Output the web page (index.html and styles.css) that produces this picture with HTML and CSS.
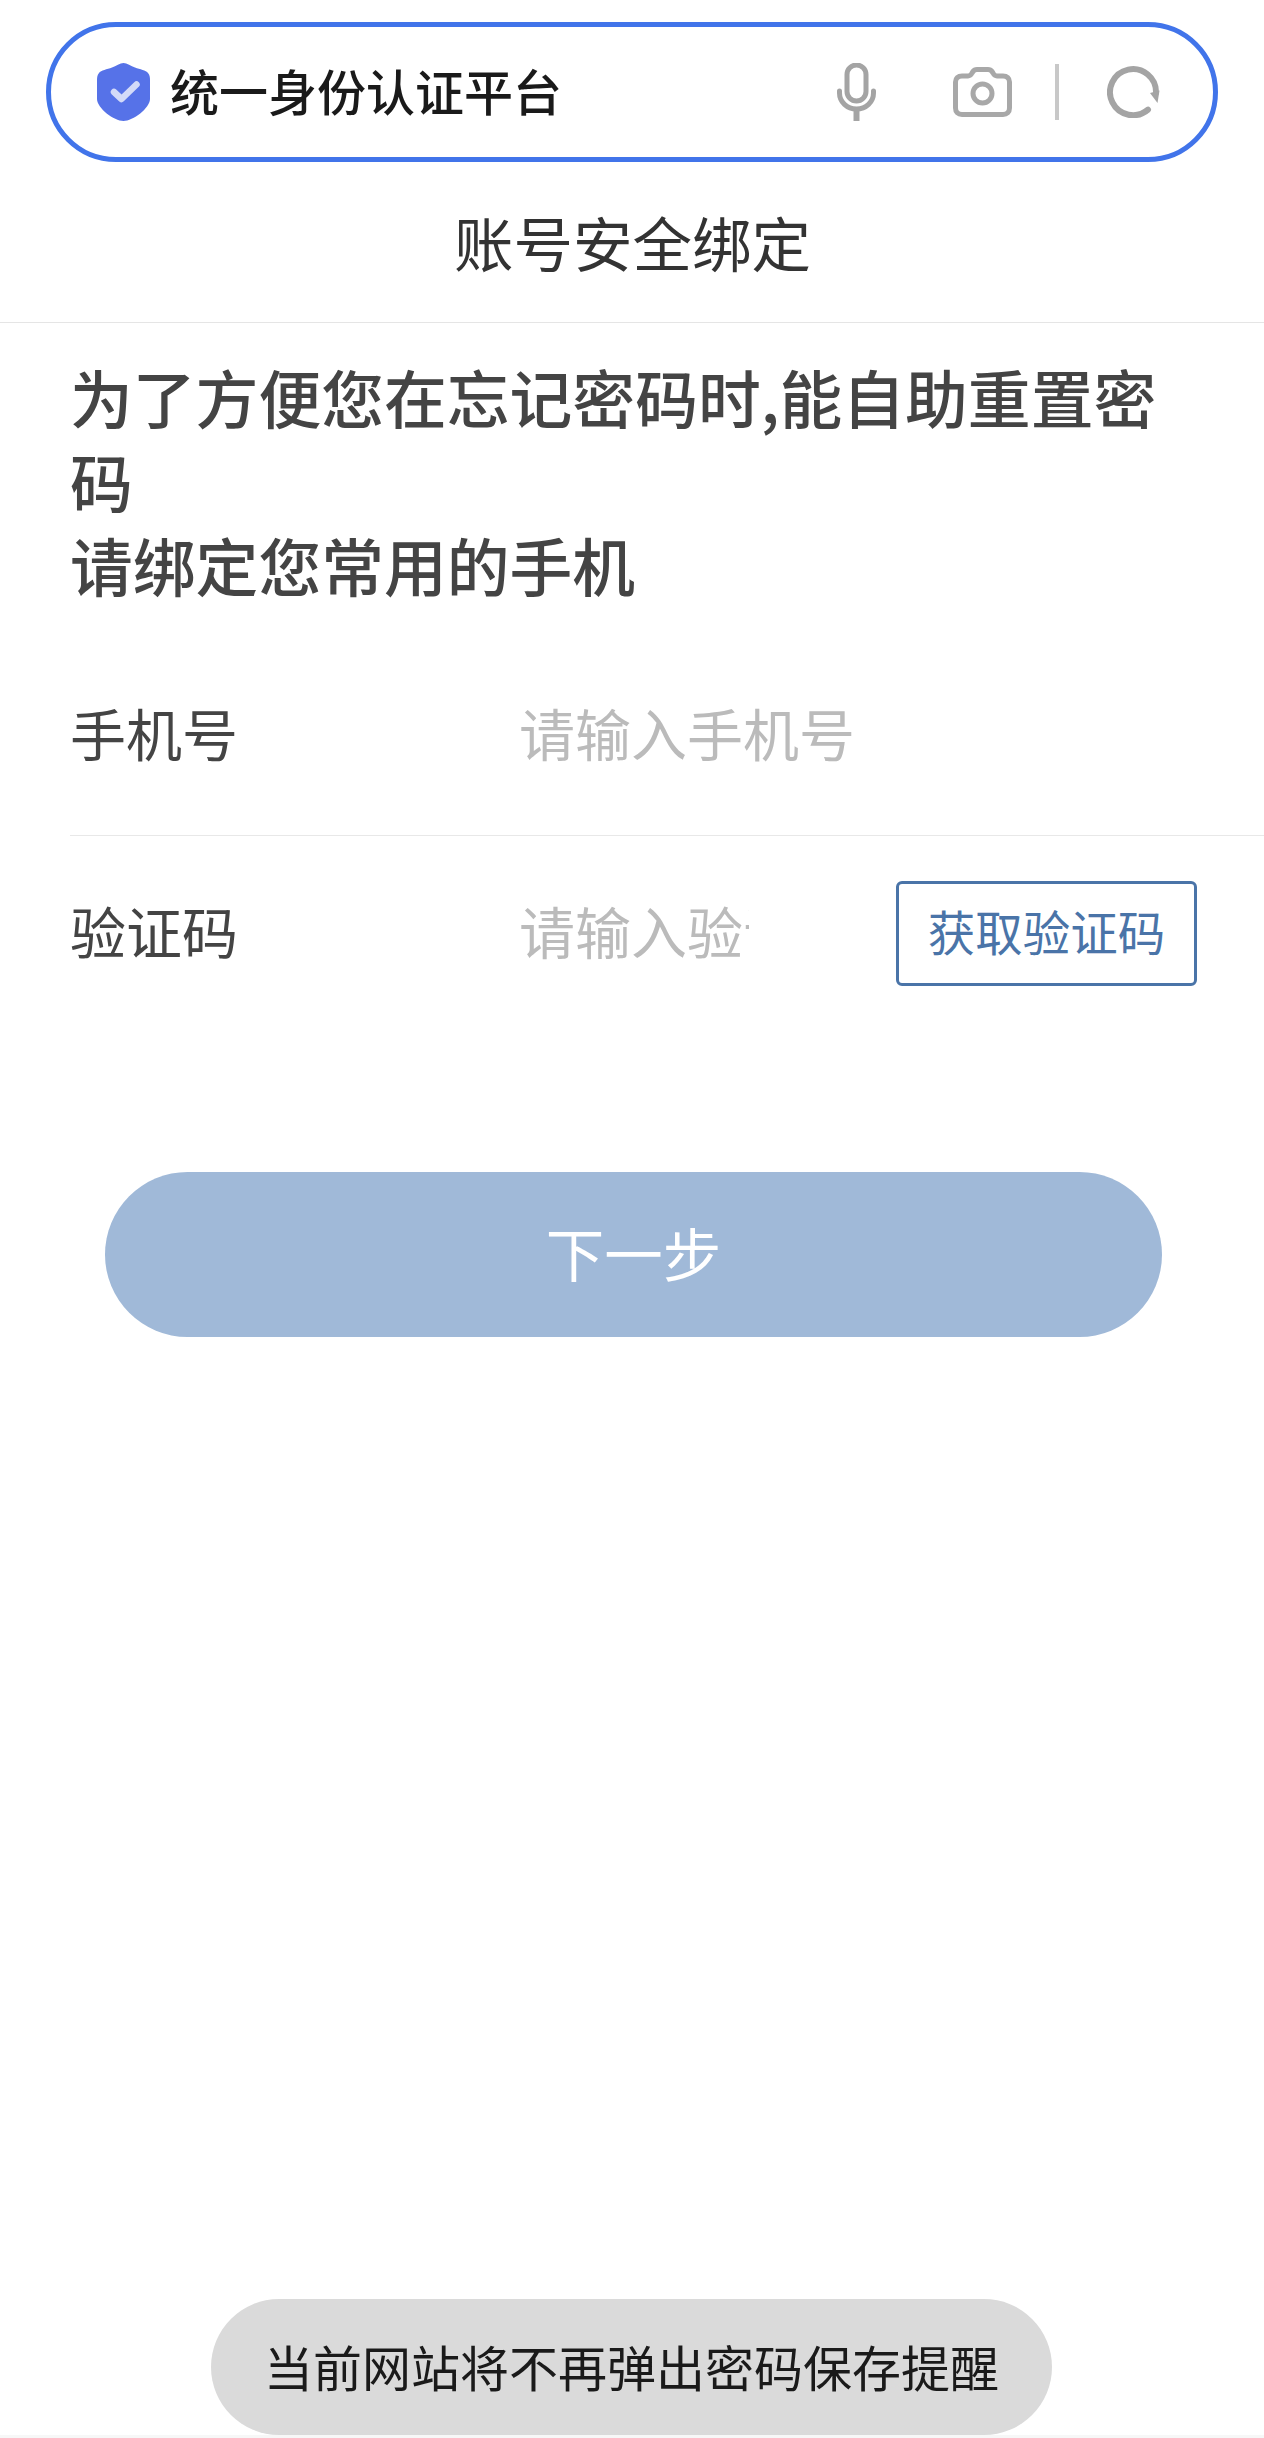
FILE: index.html
```html
<!DOCTYPE html>
<html lang="zh-CN">
<head>
    <meta charset="UTF-8">
    <meta name="viewport" content="width=device-width, initial-scale=1.0">
    <title>账号安全绑定</title>
    <link rel="stylesheet" href="styles.css">
</head>
<body>
    <div class="address-bar">
        <svg class="icon-shield" viewBox="0 0 53 58" width="53" height="58">
            <path d="M26.500 0C30 0 34 3 38 4.500C43 6.500 49 7 51 10C53 12 53 15 53 18V36C53 45 36 58 26.500 58C17 58 0 45 0 36V18C0 15 0 12 2 10C4 7 10 6.500 15 4.500C19 3 23 0 26.500 0Z" fill="#5672e8"/>
            <path d="M17 29L24.500 36L39.500 21.500" fill="none" stroke="#d3daf8" stroke-width="6.500" stroke-linecap="round" stroke-linejoin="round"/>
        </svg>
        <span class="address-text">统一身份认证平台</span>
        <svg class="icon-mic" viewBox="0 0 39 58" width="39" height="58">
            <rect x="10" y="2" width="19" height="36" rx="9.500" fill="none" stroke="#a4a4a4" stroke-width="5"/>
            <path d="M2.500 28V30C2.500 39 10 46 19.500 46C29 46 36.500 39 36.500 30V28" fill="none" stroke="#a4a4a4" stroke-width="5" stroke-linecap="round"/>
            <path d="M19.500 46V58" stroke="#a4a4a4" stroke-width="6"/>
        </svg>
        <svg class="icon-camera" viewBox="0 0 59 50" width="59" height="50">
            <path d="M9 9H15C17 9 18 8 19 6L20 4.500C21 3 22.500 2.500 24 2.500H35C36.500 2.500 38 3 39 4.500L40 6C41 8 42 9 44 9H50C54 9 56.500 11.500 56.500 15V41C56.500 45 54 47.500 50 47.500H9C5 47.500 2.500 45 2.500 41V15C2.500 11.500 5 9 9 9Z" fill="none" stroke="#a8a8a8" stroke-width="5"/>
            <circle cx="29.500" cy="26.500" r="9.500" fill="none" stroke="#a8a8a8" stroke-width="5"/>
        </svg>
        <span class="address-divider"></span>
        <svg class="icon-refresh" viewBox="0 0 53 52" width="53" height="52">
            <path d="M41 43.600A23 23 0 1 1 49 27" fill="none" stroke="#a4a4a4" stroke-width="6" stroke-linecap="round"/>
            <path d="M43 27L52.500 24.500L50.500 37Z" fill="#a4a4a4"/>
        </svg>
    </div>

    <header class="page-title">账号安全绑定</header>

    <main>
        <h1 class="notice">为了方便您在忘记密码时,能自助重置密码<br>请绑定您常用的手机</h1>

        <form class="bind-form" onsubmit="event.preventDefault();">
            <div class="form-row row-line">
                <label class="form-label" for="phoneInput">手机号</label>
                <input class="form-input input-wide" type="text" id="phoneInput" placeholder="请输入手机号">
            </div>
            <div class="form-row">
                <label class="form-label" for="codeInput">验证码</label>
                <input class="form-input input-short" type="text" id="codeInput" placeholder="请输入验证码">
                <button class="code-button" type="button">获取验证码</button>
            </div>
            <button class="next-button" type="submit">下一步</button>
        </form>
    </main>

    <div class="toast">当前网站将不再弹出密码保存提醒</div>
    <div class="bottom-strip"></div>
</body>
</html>
```

FILE: styles.css
```css
html, body {
    margin: 0;
    height: 2438px;
    overflow: hidden;
}

body {
    position: relative;
    background-color: #fff;
    font-family: 'Noto Sans CJK SC', 'Noto Sans', sans-serif;
}

.address-bar {
    display: flex;
    align-items: center;
    box-sizing: border-box;
    width: 1172px;
    height: 140px;
    margin: 22px 0 0 46px;
    padding-left: 46px;
    border: 5px solid #4174ea;
    border-radius: 70px;
}

.icon-shield {
    flex: none;
}

.address-text {
    margin: 0 0 6px 20px;
    font-size: 49px;
    font-weight: 500;
    color: #1a1a1a;
    line-height: 1;
}

.icon-mic {
    flex: none;
    margin-left: 275px;
}

.icon-camera {
    flex: none;
    margin-left: 77px;
}

.address-divider {
    flex: none;
    width: 4px;
    height: 56px;
    margin-left: 43px;
    background-color: #c8c8c8;
}

.icon-refresh {
    flex: none;
    margin-left: 48px;
}

.page-title {
    box-sizing: border-box;
    height: 161px;
    padding: 49px 0 0 1px;
    border-bottom: 1px solid #e5e5e5;
    font-size: 59.500px;
    line-height: 60px;
    color: #333;
    text-align: center;
}

.notice {
    width: 1130px;
    margin: 31px 0 0 70px;
    font-size: 62.800px;
    font-weight: 500;
    line-height: 84px;
    color: #444;
}

.form-row {
    display: flex;
    align-items: center;
    box-sizing: border-box;
    margin-left: 70px;
    height: 194px;
}

.row-line {
    height: 230px;
    padding-top: 29px;
    border-bottom: 1px solid #e8e8e8;
}

.form-label {
    flex: none;
    width: 449px;
    margin-bottom: 6px;
    font-size: 56px;
    line-height: 1;
    color: #444;
}

.form-input {
    flex: none;
    box-sizing: border-box;
    margin-bottom: 6px;
    padding: 0;
    border: 0;
    outline: 0;
    font-family: inherit;
    font-size: 56px;
    line-height: 80px;
    height: 80px;
    color: #333;
}

.form-input::placeholder {
    color: #bbb;
    opacity: 1;
}

.input-wide {
    width: 600px;
}

.input-short {
    width: 230px;
}

.code-button {
    flex: none;
    box-sizing: border-box;
    width: 301px;
    height: 105px;
    margin-left: 147px;
    padding: 0 0 6px;
    border: 3px solid #4a74a8;
    border-radius: 6px;
    background-color: #fff;
    font-family: inherit;
    font-size: 47.500px;
    color: #4a74a8;
}

.next-button {
    display: block;
    width: 1057px;
    height: 165px;
    margin: 142px 0 0 105px;
    padding: 0 0 6px;
    border: 0;
    border-radius: 83px;
    background-color: #a0b9d8;
    font-family: inherit;
    font-size: 58.500px;
    color: #fff;
}

.toast {
    position: absolute;
    left: 211px;
    bottom: 3px;
    box-sizing: border-box;
    width: 841px;
    height: 136px;
    padding-bottom: 2px;
    border-radius: 68px;
    background-color: #dadada;
    font-size: 49px;
    line-height: 134px;
    color: #1a1a1a;
    text-align: center;
}

.bottom-strip {
    position: absolute;
    left: 0;
    right: 0;
    bottom: 0;
    height: 3px;
    background-color: #f7f7f7;
}
```
